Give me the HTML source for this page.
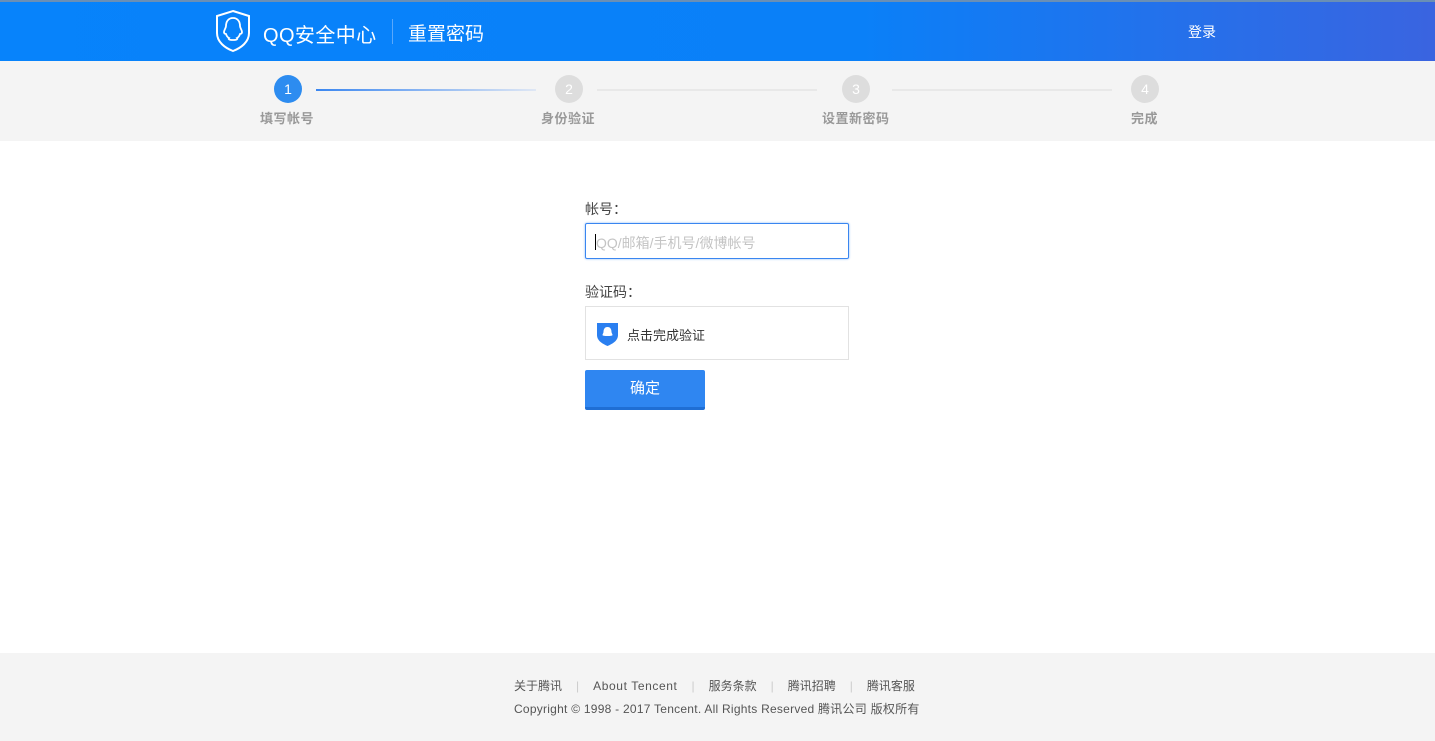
<!DOCTYPE html>
<html><head><meta charset="utf-8"><style>
*{margin:0;padding:0;box-sizing:border-box}
body{width:1435px;height:741px;background:#fff;font-family:"Liberation Sans","Noto Sans CJK SC",sans-serif;position:relative;overflow:hidden}
.hd{position:absolute;left:0;top:0;width:1435px;height:61px;background:linear-gradient(90deg,#0783fb 0%,#0a80f8 60%,#3a64e0 100%);border-top:2px solid #6a8fb5}
.abs{position:absolute}
.steps{position:absolute;top:61px;left:0;width:1435px;height:80px;background:#f4f4f4}
.c{position:absolute;width:28px;height:28px;border-radius:50%;background:#ddd;color:#fff;font-size:14px;text-align:center;line-height:28px;top:14px}
.lb{position:absolute;top:47px;font-size:13px;font-weight:bold;color:#999;white-space:nowrap}
.ln{position:absolute;top:28px;height:2px;background:#e8e8e8}
.ft{position:absolute;top:653px;left:0;width:1435px;height:88px;background:#f4f4f4;font-size:12px;color:#555}
.sep{color:#ccc;margin:0 14px}
</style></head><body>
<div class="hd">
<svg class="abs" style="left:214px;top:7px" width="38" height="44" viewBox="0 0 38 44"><path d="M19 2 L35 7 V24 C35 33 27 39 19 42 C11 39 3 33 3 24 V7 Z" fill="none" stroke="#fff" stroke-width="2"/><path d="M19 9c-5 0-7 4-7 8 0 2-2 4-2 6 0 2 2 2 2 2s1 3 3 4c-1 1 0 2 4 2s5-1 4-2c2-1 3-4 3-4s2 0 2-2c0-2-2-4-2-6 0-4-2-8-7-8z" fill="none" stroke="#fff" stroke-width="1.8"/></svg>
<div class="abs" style="left:263px;top:17px;font-size:20px;color:#fff;letter-spacing:0.4px">QQ安全中心</div>
<div class="abs" style="left:392px;top:17px;width:1px;height:25px;background:#5aa8fb"></div>
<div class="abs" style="left:408px;top:17px;font-size:19px;color:#fff">重置密码</div>
<div class="abs" style="left:1188px;top:20px;font-size:14px;color:#fff">登录</div>
</div>
<div class="steps">
<div class="c" style="left:274px;background:#2d8cf0">1</div>
<div class="ln" style="left:316px;width:220px;background:linear-gradient(90deg,#3a86f0,#dfe7f4)"></div>
<div class="c" style="left:555px">2</div>
<div class="ln" style="left:597px;width:220px"></div>
<div class="c" style="left:842px">3</div>
<div class="ln" style="left:892px;width:220px"></div>
<div class="c" style="left:1131px">4</div>
<div class="lb" style="left:260px;letter-spacing:0.5px">填写帐号</div>
<div class="lb" style="left:541px;letter-spacing:0.5px">身份验证</div>
<div class="lb" style="left:822px;letter-spacing:0.5px">设置新密码</div>
<div class="lb" style="left:1131px;letter-spacing:0.5px">完成</div>
</div>
<div class="abs" style="left:585px;top:199px;font-size:14px;color:#444">帐号：</div>
<div class="abs" style="left:585px;top:223px;width:264px;height:36px;border:1px solid #3a86f0;border-radius:2px;box-shadow:0 0 2px #8bb8f5"><div class="abs" style="left:9px;top:10px;width:1px;height:16px;background:#000"></div><span class="abs" style="left:10px;top:9px;font-size:14px;color:#c4c4c4">QQ/邮箱/手机号/微博帐号</span></div>
<div class="abs" style="left:585px;top:282px;font-size:14px;color:#444">验证码：</div>
<div class="abs" style="left:585px;top:306px;width:264px;height:54px;border:1px solid #e2e2e2">
<svg class="abs" style="left:10px;top:14px" width="23" height="26" viewBox="0 0 23 26"><path d="M1 2 L22 2 V14 C22 20 16 23 11.5 25 C7 23 1 20 1 14Z" fill="#2a7ff0"/><path d="M11.5 6c-3 0-4 2.5-4 5 0 1-1 2-1 3s4 1 5 1 5 0 5-1-1-2-1-3c0-2.5-1-5-4-5z" fill="#fff"/></svg>
<span class="abs" style="left:41px;top:18px;font-size:13px;color:#333">点击完成验证</span></div>
<div class="abs" style="left:585px;top:370px;width:120px;height:40px;background:#2f86f1;border-bottom:3px solid #1f6ed4;border-radius:2px;color:#fff;font-size:15px;text-align:center;line-height:38px">确定</div>
<div class="ft">
<div class="abs" style="left:514px;top:24px;white-space:nowrap">关于腾讯<span class="sep">|</span><span style="letter-spacing:0.6px">About Tencent</span><span class="sep">|</span>服务条款<span class="sep">|</span>腾讯招聘<span class="sep">|</span>腾讯客服</div>
<div class="abs" style="left:514px;top:47px;white-space:nowrap;letter-spacing:0.25px">Copyright © 1998 - 2017 Tencent. All Rights Reserved 腾讯公司 版权所有</div>
</div>
</body></html>
